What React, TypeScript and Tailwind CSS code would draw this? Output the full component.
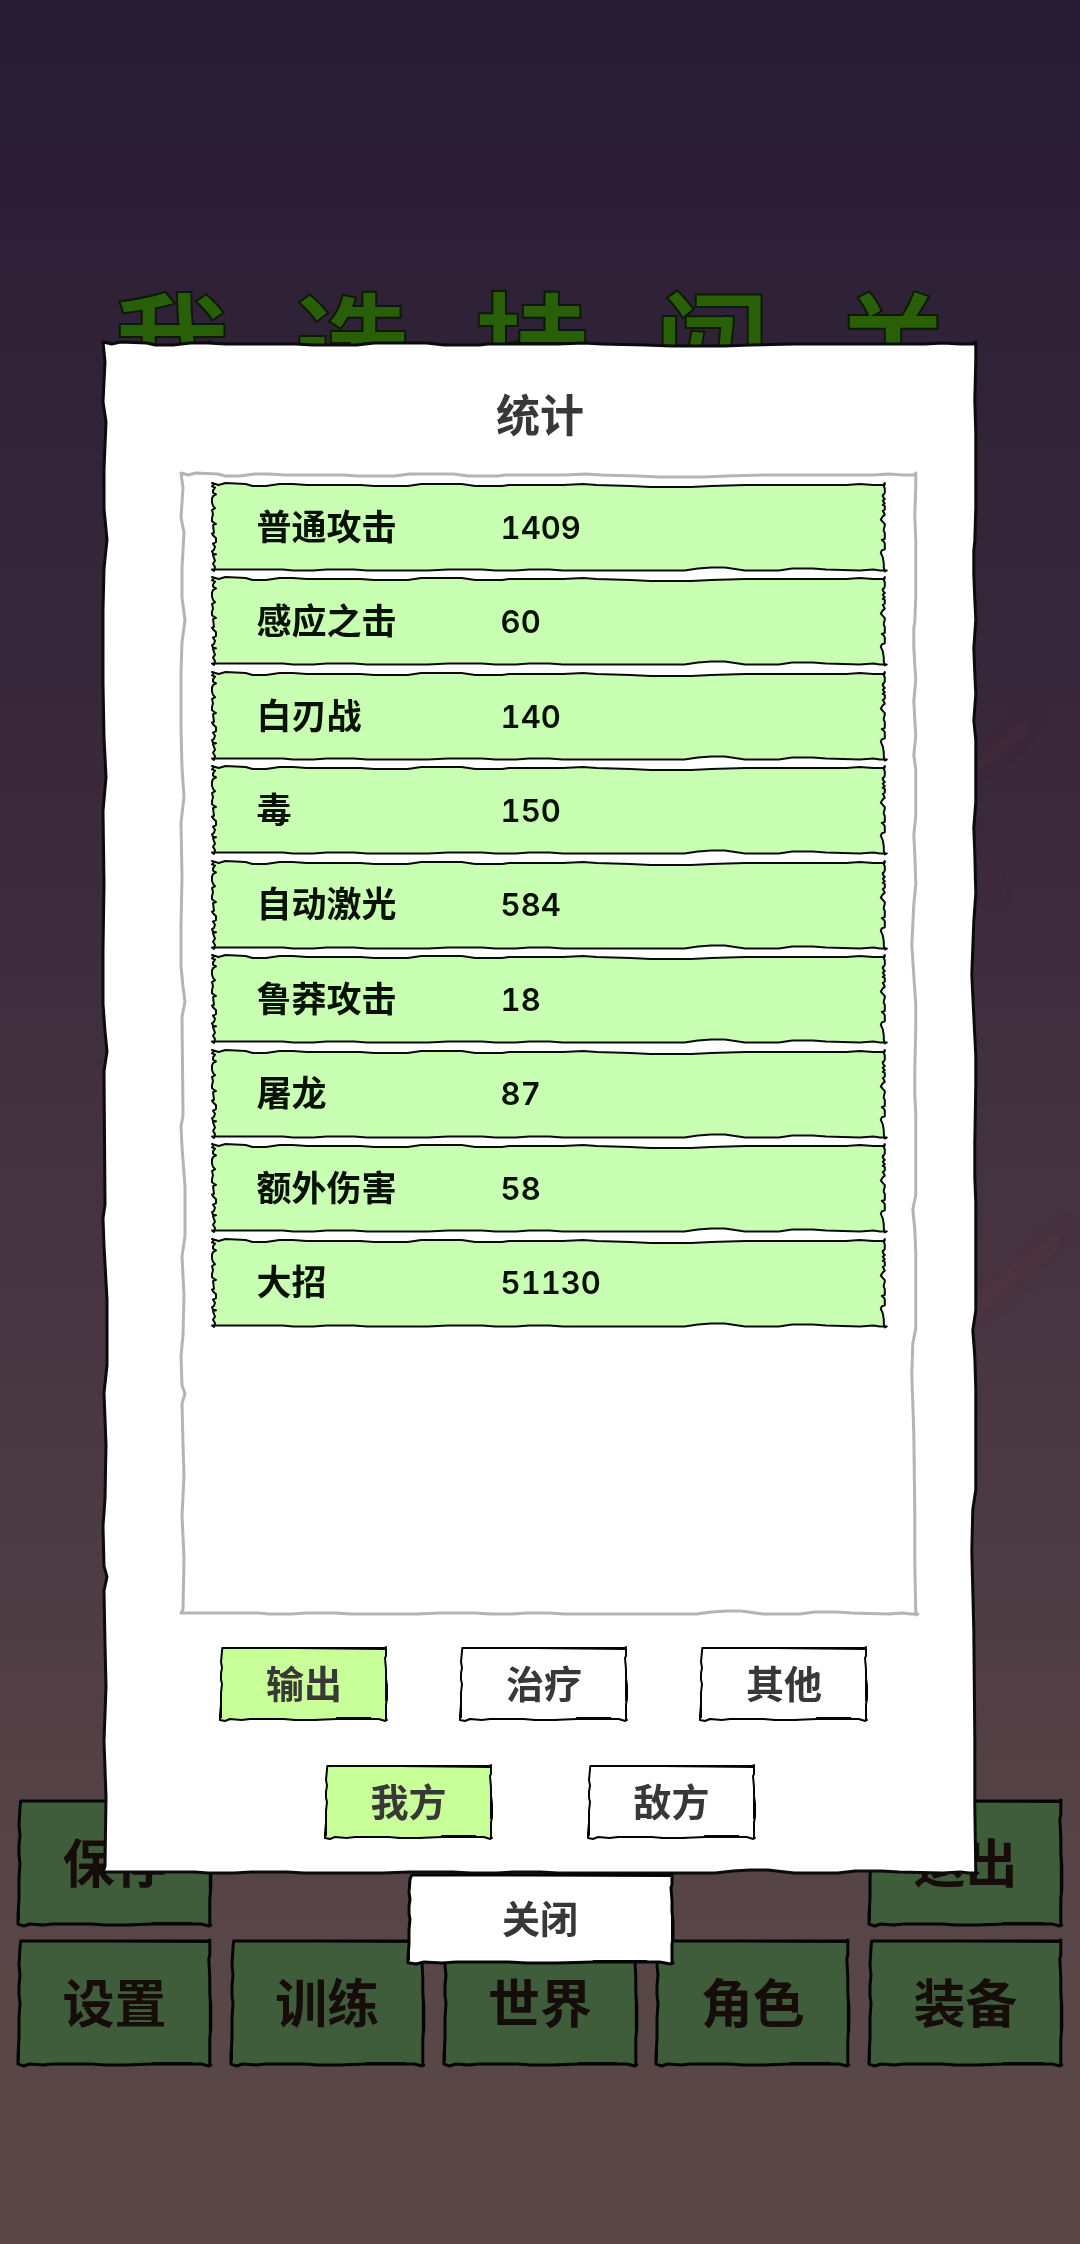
import { useLayoutEffect, useRef, useState } from "react";
import type { ReactNode } from "react";

type Point = [number, number];

interface Edges {
  top: Point[];
  right: Point[];
  bottom: Point[];
  left: Point[];
}

// Each point is [position along the edge in permille, inset from the edge in px].
const paper: Edges = {
  top: [[0, 0], [10, 2], [20, 0], [50, 1], [60, 3], [80, 3], [100, 1], [120, 1], [140, 2], [220, 2], [240, 3], [290, 3], [310, 1], [370, 1], [390, 3], [430, 3], [440, 2], [520, 2], [550, 1], [570, 2], [620, 3], [650, 4], [710, 4], [740, 3], [790, 2], [840, 2], [940, 2], [960, 1], [980, 2], [995, 2]],
  right: [[0, 2], [11, 2], [38, 3], [60, 2], [108, 2], [130, 3], [136, 4], [152, 4], [168, 3], [181, 2], [200, 4], [216, 3], [230, 2], [247, 4], [260, 2], [300, 2], [317, 4], [334, 3], [360, 2], [378, 4], [413, 6], [440, 4], [466, 2], [484, 2], [523, 3], [545, 3], [562, 2], [632, 2], [645, 5], [662, 3], [684, 2], [749, 2], [762, 5], [789, 6], [815, 5], [841, 4], [911, 3], [955, 3], [1000, 2]],
  bottom: [[1000, 1], [990, 1], [980, 2], [960, 1], [910, 2], [890, 3], [860, 3], [840, 1], [790, 1], [760, 4], [740, 4], [720, 3], [700, 1], [660, 1], [520, 1], [500, 2], [470, 2], [450, 1], [420, 1], [400, 2], [350, 2], [320, 1], [230, 1], [210, 2], [170, 2], [150, 1], [120, 1], [105, 2], [0, 2]],
  left: [[995, 2], [950, 3], [913, 1], [878, 3], [850, 2], [815, 1], [806, 4], [799, 1], [773, 0], [755, 2], [720, 3], [686, 1], [668, 4], [625, 4], [590, 1], [572, 0], [563, 2], [476, 1], [463, 4], [450, 2], [432, 0], [397, 0], [354, 1], [306, 0], [284, 3], [258, 1], [223, 0], [175, 0], [148, 1], [129, 4], [109, 1], [83, 1], [52, 3], [39, 0], [13, 2]],
};

const card: Edges = {
  top: [[14, 1], [985, 1]],
  right: [[0, 1], [120, 1], [150, 2], [300, 1], [420, 1], [520, 0], [700, 0], [780, 1], [985, 1]],
  bottom: [[1000, 1], [990, 0], [970, 1], [950, 2], [880, 2], [780, 2], [700, 2], [560, 1], [450, 1], [380, 2], [180, 2], [130, 1], [60, 2], [30, 0]],
  left: [[985, 0], [920, 0], [780, 1], [700, 1], [620, 1], [500, 2], [440, 1], [360, 1], [280, 2], [200, 1], [60, 2]],
};

function outline(edges: Edges, w: number, h: number) {
  const points = [
    ...edges.top.map(([t, d]) => [(t * w) / 1000, d]),
    ...edges.right.map(([t, d]) => [w - d, (t * h) / 1000]),
    ...edges.bottom.map(([t, d]) => [(t * w) / 1000, h - d]),
    ...edges.left.map(([t, d]) => [d, (t * h) / 1000]),
  ];
  return "M" + points.map(([x, y]) => `${x.toFixed(1)} ${y.toFixed(1)}`).join("L") + "Z";
}

// Short second strokes where the pen pressed harder.
function pressure(w: number, h: number) {
  return [
    `M${w * 0.45} 1L${w - 2} 2`,
    `M${w * 0.7} ${h - 3}L${w * 0.9} ${h - 3}`,
    `M${w * 0.44} ${h - 1}L${w * 0.58} ${h - 1}`,
    `M${w - 1} ${h * 0.45}L${w - 1} ${h * 0.72}`,
    `M1 ${h * 0.75}L1 ${h * 0.95}`,
  ].join("");
}

function InkFrame({
  edges,
  fill,
  stroke = "#0b0b0b",
  width = 2,
  accents = false,
}: {
  edges: Edges;
  fill: string;
  stroke?: string;
  width?: number;
  accents?: boolean;
}) {
  const ref = useRef<SVGSVGElement>(null);
  const [size, setSize] = useState({ w: 0, h: 0 });

  useLayoutEffect(() => {
    const node = ref.current;
    if (!node) return;
    const measure = () => {
      const box = node.getBoundingClientRect();
      setSize({ w: box.width, h: box.height });
    };
    measure();
    const observer = new ResizeObserver(measure);
    observer.observe(node);
    return () => observer.disconnect();
  }, []);

  const { w, h } = size;
  return (
    <svg ref={ref} aria-hidden="true" className="pointer-events-none absolute inset-0 -z-10 h-full w-full overflow-visible">
      {w > 0 && (
        <>
          <path d={outline(edges, w, h)} fill={fill} stroke={stroke} strokeWidth={width} strokeLinejoin="round" />
          {accents && <path d={pressure(w, h)} fill="none" stroke={stroke} strokeWidth={2} strokeLinecap="round" />}
        </>
      )}
    </svg>
  );
}

function NavButton({ children, className = "" }: { children: ReactNode; className?: string }) {
  return (
    <button type="button" className={`relative isolate h-[126px] pt-1 text-[52px] leading-none font-bold text-[#160d0b] ${className}`}>
      <InkFrame edges={card} fill="#3f5d3a" stroke="#050505" width={3} accents />
      {children}
    </button>
  );
}

function TabButton({ label, active, onSelect }: { label: string; active: boolean; onSelect: () => void }) {
  return (
    <button
      type="button"
      aria-pressed={active}
      onClick={onSelect}
      className="relative isolate h-[74px] w-[167px] text-[38px] leading-none font-bold text-[#383838]"
    >
      <InkFrame edges={card} fill={active ? "#c8ff98" : "#ffffff"} stroke="#050505" width={2} accents />
      {label}
    </button>
  );
}

const stats: { name: string; value: number }[] = [
  { name: "普通攻击", value: 1409 },
  { name: "感应之击", value: 60 },
  { name: "白刃战", value: 140 },
  { name: "毒", value: 150 },
  { name: "自动激光", value: 584 },
  { name: "鲁莽攻击", value: 18 },
  { name: "屠龙", value: 87 },
  { name: "额外伤害", value: 58 },
  { name: "大招", value: 51130 },
];

function Sky() {
  return (
    <svg
      aria-hidden="true"
      viewBox="0 0 1080 2244"
      preserveAspectRatio="none"
      className="absolute inset-0 -z-10 h-full w-full"
    >
      <defs>
        <filter id="haze" x="-50%" y="-50%" width="200%" height="200%">
          <feGaussianBlur stdDeviation="7" />
        </filter>
      </defs>
      <g fill="#6a2a3c" filter="url(#haze)">
        <path d="M960 778L1036 712L1020 736L970 775Z" opacity=".35" />
        <path d="M975 820L1000 905L985 890Z" opacity=".15" />
        <path d="M970 1300L1070 1220L1056 1250L975 1320Z" opacity=".2" />
      </g>
    </svg>
  );
}

export default function App() {
  const [kind, setKind] = useState("输出");
  const [side, setSide] = useState("我方");

  return (
    <div className="relative isolate flex min-h-screen flex-col bg-linear-to-b from-[#281c33] from-0% via-[#3a293b] via-35% to-[#594748] to-90% font-['Inter','Noto_Sans_CJK_SC',sans-serif]">
      <Sky />

      <h1 className="flex justify-center gap-16 pt-[290px] pr-4 text-[116px] leading-none font-bold text-[#2a5f0a] [-webkit-text-stroke:2px_#0c1a05]">
        {["我", "选", "挂", "闯", "关"].map((char) => (
          <span key={char}>{char}</span>
        ))}
      </h1>

      <nav className="mt-auto grid grid-cols-5 gap-x-5 gap-y-[14px] px-[18px] pb-[178px]">
        <NavButton>保存</NavButton>
        <NavButton className="col-start-5">退出</NavButton>
        <NavButton>设置</NavButton>
        <NavButton>训练</NavButton>
        <NavButton>世界</NavButton>
        <NavButton>角色</NavButton>
        <NavButton>装备</NavButton>
      </nav>

      <div className="absolute inset-0 flex flex-col items-center pt-[342px]">
        <section role="dialog" aria-labelledby="stats-title" className="relative isolate w-[81%] pt-11 pb-[35px]">
          <InkFrame edges={paper} fill="#ffffff" width={3} />
          <h2 id="stats-title" className="text-center text-[44px] leading-[60px] font-bold text-[#383838]">
            统计
          </h2>

          <div className="relative isolate mt-[27px] mr-[60px] ml-[78px] min-h-[1142px] px-[31px] pt-[10px]">
            <InkFrame edges={paper} fill="#ffffff" stroke="#b4b4b4" width={3} />
            <table className="block w-full">
              <tbody className="grid h-[844px] auto-rows-fr gap-[6px]">
                {stats.map((row) => (
                  <tr key={row.name} className="relative isolate flex items-center pl-[45px] text-[#0a1206]">
                    <th scope="row" className="w-[244px] text-left text-[35px] leading-none font-bold">
                      <InkFrame edges={paper} fill="#c9ffb3" width={2} />
                      {row.name}
                    </th>
                    <td className="text-[31px] leading-none font-semibold tabular-nums">{row.value}</td>
                  </tr>
                ))}
              </tbody>
            </table>
          </div>

          <div className="mt-8 flex justify-center gap-[73px] pl-2">
            {["输出", "治疗", "其他"].map((label) => (
              <TabButton key={label} label={label} active={kind === label} onSelect={() => setKind(label)} />
            ))}
          </div>
          <div className="mt-11 flex justify-center gap-24">
            {["我方", "敌方"].map((label) => (
              <TabButton key={label} label={label} active={side === label} onSelect={() => setSide(label)} />
            ))}
          </div>
        </section>

        <button type="button" className="relative isolate h-[90px] w-[265px] text-[38px] leading-none font-bold text-[#383838]">
          <InkFrame edges={card} fill="#ffffff" stroke="#050505" width={3} accents />
          关闭
        </button>
      </div>
    </div>
  );
}
